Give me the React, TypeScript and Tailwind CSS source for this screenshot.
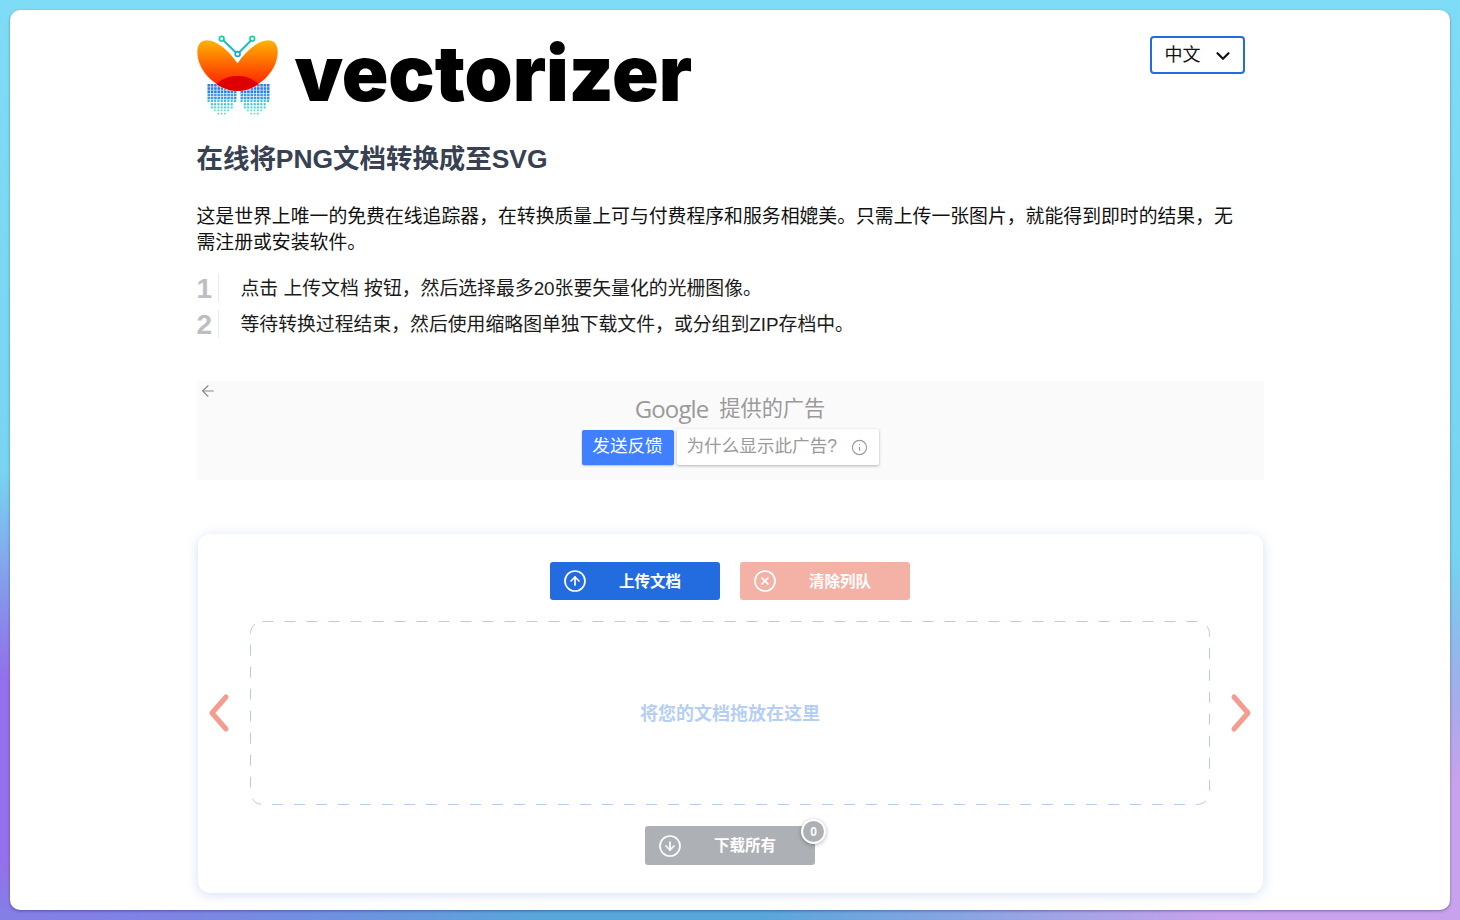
import { ArrowDownCircle, ArrowLeft, ArrowUpCircle, ChevronDown, Info, XCircle } from "lucide-react";

const FONT = "font-['Liberation_Sans','Noto_Sans_CJK_SC',sans-serif]";

// dotted lobes under the butterfly
const dots: { x: number; y: number; c: string; s: number }[] = [];
for (let row = 0; row < 10; row++) {
  for (let col = 0; col < 19; col++) {
    const x = 207.5 + col * 3.3;
    const y = 84 + row * 3.2;
    const dl = Math.hypot((x - 221) / 15, (y - 90) / 25);
    const dr = Math.hypot((x - 254) / 15, (y - 90) / 25);
    if (dl > 1 && dr > 1) continue;
    const c = row < 3 ? "#2f7de8" : row < 5 ? "#3a9bea" : row < 7 ? "#3cc0e0" : "#4fdcc4";
    dots.push({ x, y, c, s: row < 5 ? 2.6 : row < 8 ? 2.1 : 1.6 });
  }
}

const Logo = () => (
  <svg width="82" height="80" viewBox="197 35 82 80" className="shrink-0">
    <defs>
      <linearGradient id="wing" x1="0" y1="0" x2="0" y2="1">
        <stop offset="0" stopColor="#ffb400" />
        <stop offset="0.55" stopColor="#ff5a00" />
        <stop offset="1" stopColor="#ff1500" />
      </linearGradient>
      <clipPath id="wingClip">
        <path d="M237.5 63C231 53 218 40 207 40C200 40 197 45 197 52C197 72 218 91 237.5 91C257 91 278 72 278 52C278 45 275 40 268 40C257 40 244 53 237.5 63Z" />
      </clipPath>
    </defs>
    {dots.map((d, i) => (
      <rect key={i} x={d.x} y={d.y} width={d.s} height={d.s} fill={d.c} />
    ))}
    <path
      d="M237.5 63C231 53 218 40 207 40C200 40 197 45 197 52C197 72 218 91 237.5 91C257 91 278 72 278 52C278 45 275 40 268 40C257 40 244 53 237.5 63Z"
      fill="url(#wing)"
      stroke="#fff"
      strokeWidth="0.6"
    />
    <ellipse cx="237.5" cy="94" rx="25" ry="18" fill="#de0000" clipPath="url(#wingClip)" />
    <path d="M223.5 40.5L236 52.5M251 40.5L239 52.5" stroke="#1cbcc0" strokeWidth="2" fill="none" />
    <circle cx="221.7" cy="38.7" r="2.3" fill="#fff" stroke="#16cfa6" strokeWidth="1.7" />
    <circle cx="252.3" cy="38.7" r="2.3" fill="#fff" stroke="#16cfa6" strokeWidth="1.7" />
    <circle cx="237.6" cy="54" r="2.4" fill="#fff" stroke="#18a9d8" strokeWidth="1.7" />
  </svg>
);

const Step = ({ n, text }: { n: string; text: string }) => (
  <div className="flex h-9 items-center">
    <span className="flex h-[28px] w-[22px] items-center border-r border-[#ececec] pt-[2px] text-[28px] font-bold text-[#bcbec1]">{n}</span>
    <span className="ml-[22px] pt-[2px] text-[18.85px] text-[#1b1b1b]">{text}</span>
  </div>
);

const App = () => (
  <div className={`h-[920px] overflow-hidden bg-[radial-gradient(ellipse_620px_300px_at_0px_770px,#9470ea_0%,#9470ea_30%,rgba(148,112,234,0)_100%),radial-gradient(ellipse_700px_340px_at_1460px_900px,#c8a2ec_0%,#c8a2ec_35%,rgba(200,162,236,0)_100%),linear-gradient(to_bottom,#7fdcf6_0%,#76d4f0_60%,#58a6da_100%)] p-[10px] ${FONT}`}>
    <div className="h-[900px] rounded-[10px] bg-white shadow-[0_1px_3px_rgba(20,20,70,0.4)]">
      <div className="mx-auto w-[1067px] pt-[25px]">
        <div className="flex items-start justify-between">
          <div className="flex items-start">
            <Logo />
            <span className="ml-[16px] font-['Inter'] text-[77px] leading-[76px] font-black tracking-[-0.1px] text-black">vectorizer</span>
          </div>
          <div className="mt-[1px] mr-[19px] flex h-[38px] w-[95px] items-center justify-between rounded-[4px] border-2 border-[#226ce0] pt-px pr-[9px] pl-[13px] text-[18px] text-[#111]">
            中文
            <ChevronDown size={22} strokeWidth={2.4} />
          </div>
        </div>

        <h1 className="mt-[26px] text-[26.45px] leading-[36px] font-bold text-[#374151]">在线将PNG文档转换成至SVG</h1>
        <p className="mt-[27px] mr-[30px] text-[18.85px] leading-[26px] text-[#111]">
          这是世界上唯一的免费在线追踪器，在转换质量上可与付费程序和服务相媲美。只需上传一张图片，就能得到即时的结果，无需注册或安装软件。
        </p>

        <div className="mt-[14px]">
          <Step n="1" text="点击 上传文档 按钮，然后选择最多20张要矢量化的光栅图像。" />
          <Step n="2" text="等待转换过程结束，然后使用缩略图单独下载文件，或分组到ZIP存档中。" />
        </div>

        <div className="relative mt-[39px] flex h-[99px] flex-col items-center bg-[#fafafa] pt-[13px]">
          <ArrowLeft size={18} strokeWidth={1.5} className="absolute top-px left-[2px] text-[#8a8a8a]" />
          <div className="flex h-[30px] items-center text-[#9a9a9a]">
            <span className="font-['Open_Sans'] text-[24px] tracking-[-0.9px]">Google</span>
            <span className="ml-[11px] text-[21.2px]">提供的广告</span>
          </div>
          <div className="mt-[5px] flex items-center gap-[3px]">
            <span className="flex h-[35px] w-[92px] items-center justify-center rounded-[2px] bg-[#4080ff] pb-[2px] text-[17.6px] text-white shadow-[0_1px_2px_rgba(0,0,0,0.25)]">发送反馈</span>
            <span className="flex h-[36px] w-[202px] items-center justify-between rounded-[2px] bg-white pr-[11px] pb-[2px] pl-[10px] text-[17.6px] text-[#9a9a9a] shadow-[0_1px_3px_rgba(0,0,0,0.3)]">
              为什么显示此广告?
              <Info size={17} strokeWidth={1.6} className="mt-[2px]" />
            </span>
          </div>
        </div>

        <div className="mx-px mt-[54px] h-[359px] rounded-[12px] bg-white px-[9px] pt-[28px] shadow-[0_2px_12px_rgba(70,110,220,0.22)]">
          <div className="flex justify-center gap-[20px]">
            <div className="flex h-[38px] w-[170px] items-center rounded-[3px] bg-[#226ce0] pl-[13px] text-white">
              <ArrowUpCircle size={24} strokeWidth={1.7} />
              <span className="ml-[32px] pt-px text-[15.5px] font-bold">上传文档</span>
            </div>
            <div className="flex h-[38px] w-[170px] items-center rounded-[3px] bg-[#f4b2a6] pl-[13px] text-white">
              <XCircle size={24} strokeWidth={1.7} />
              <span className="ml-[32px] pt-px text-[15.5px] font-bold">清除列队</span>
            </div>
          </div>

          <div className="mt-[21px] flex items-center justify-between">
            <svg width="24" height="44" viewBox="0 0 24 44" fill="none" stroke="#f49c8e" strokeWidth="5" strokeLinecap="round" strokeLinejoin="round">
              <path d="M19 6L5 22L19 38" />
            </svg>
            <div className="relative flex h-[184px] w-[960px] items-center justify-center pt-[3px] text-[18px] font-bold text-[#b5cef5]">
              <svg className="absolute inset-0" width="960" height="184" fill="none">
                <rect x="0.5" y="0.5" width="959" height="183" rx="12" stroke="#b5cbf3" strokeDasharray="11 11" />
              </svg>
              将您的文档拖放在这里
            </div>
            <svg width="24" height="44" viewBox="0 0 24 44" fill="none" stroke="#f49c8e" strokeWidth="5" strokeLinecap="round" strokeLinejoin="round">
              <path d="M4 6L18 22L4 38" />
            </svg>
          </div>

          <div className="mt-[21px] flex justify-center">
            <div className="relative flex h-[39px] w-[170px] items-center rounded-[3px] bg-[#adb0b5] pl-[13px] text-white">
              <ArrowDownCircle size={24} strokeWidth={1.7} />
              <span className="ml-[32px] pt-px text-[15.5px] font-bold">下载所有</span>
              <span className="absolute -top-[7px] -right-[11px] flex h-[25px] w-[25px] items-center justify-center rounded-full border-2 border-white bg-[#adb0b5] text-[12px] font-bold shadow-[0_1px_4px_rgba(0,0,0,0.3)]">0</span>
            </div>
          </div>
        </div>
      </div>
    </div>
  </div>
);

export default App;
